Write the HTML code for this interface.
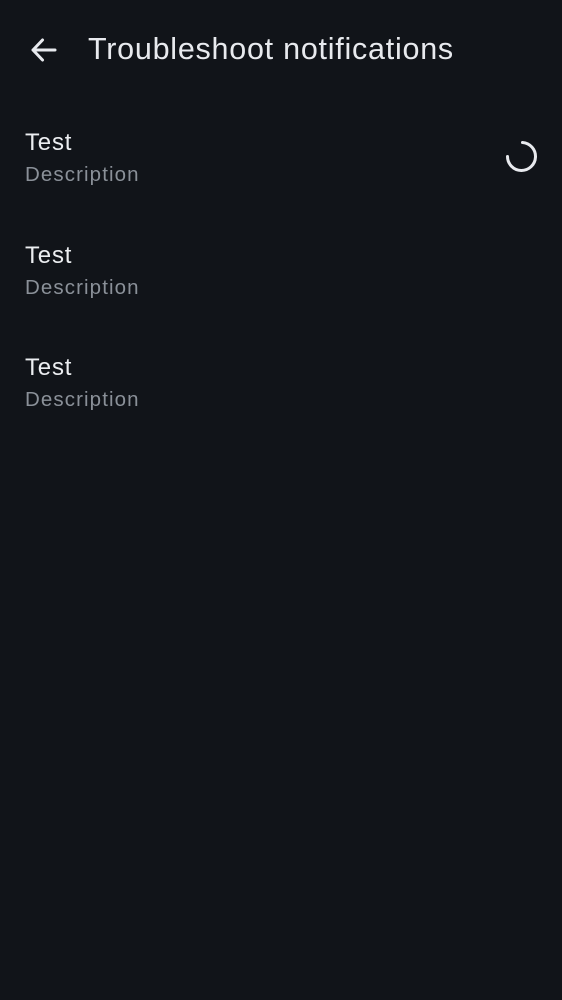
<!DOCTYPE html>
<html><head><style>
html,body{margin:0;width:562px;height:1000px;background:#111419;overflow:hidden;font-family:"Liberation Sans",sans-serif}
.t{position:absolute;left:88px;top:32px;font-size:30.5px;color:#e8eaee;letter-spacing:0.75px;white-space:nowrap}
.item{position:absolute;left:25px}
.a{font-size:24px;color:#eceef1;letter-spacing:0.8px}
.b{font-size:20.5px;color:#8a9098;margin-top:6px;letter-spacing:1.1px}
</style></head><body>
<svg style="position:absolute;left:30px;top:37px" width="28" height="26" viewBox="0 0 28 26"><path d="M3 13H25M12.5 3L3 13L12.5 23" fill="none" stroke="#e8eaee" stroke-width="3" stroke-linecap="round" stroke-linejoin="round"/></svg>
<div class="t">Troubleshoot notifications</div>
<div class="item" style="top:129px"><div class="a">Test</div><div class="b">Description</div></div>
<div class="item" style="top:242px"><div class="a">Test</div><div class="b">Description</div></div>
<div class="item" style="top:354px"><div class="a">Test</div><div class="b">Description</div></div>
<svg style="position:absolute;left:505px;top:140px" width="33" height="33" viewBox="0 0 33 33"><path d="M17.5 2.5A14 14 0 1 1 2.5 16.5" fill="none" stroke="#e8eaee" stroke-width="3" stroke-linecap="round"/></svg>
</body></html>
